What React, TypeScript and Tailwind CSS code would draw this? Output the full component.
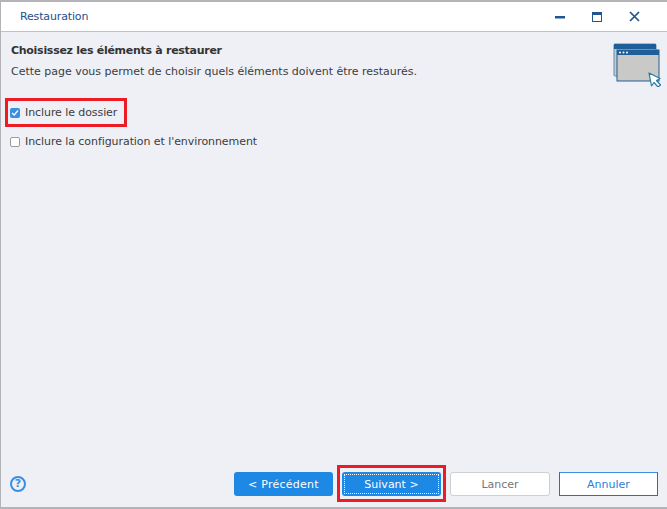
const font = "font-['DejaVu_Sans',sans-serif]";

function WindowArt() {
  return (
    <svg width="48" height="44" viewBox="0 0 48 44" className="shrink-0">
      <rect x="1" y="1" width="42" height="32" rx="1" fill="#c9c9c7" stroke="#5b8db8" />
      <rect x="1" y="1" width="42" height="5" fill="#1f5f99" />
      <rect x="4" y="7" width="42" height="31" fill="#c9c9c7" stroke="#1f5f99" />
      <rect x="4" y="7" width="42" height="5" fill="#1f5f99" />
      <circle cx="7" cy="9.5" r="1" fill="#fff" />
      <circle cx="10.5" cy="9.5" r="1" fill="#fff" />
      <circle cx="14" cy="9.5" r="1" fill="#fff" />
      <path d="M36 30 L38.5 43 L41 39.5 L45 44 L47.5 42 L43.5 37.5 L47 35.5 Z" fill="#fff" stroke="#2a7aa8" strokeWidth="1.2" strokeLinejoin="round" />
    </svg>
  );
}

function TitleButtons() {
  return (
    <div className="ml-auto flex items-center text-[#1f5590]">
      <svg width="10" height="10" viewBox="0 0 10 10" className="mr-[27px]">
        <rect x="0" y="4" width="10" height="2.5" fill="currentColor" />
      </svg>
      <span className="w-[10px] h-[10px] border border-[#1f5590] border-t-[3px] mr-[27px]" />
      <svg width="11" height="11" viewBox="0 0 11 11" className="mr-[27px]">
        <path d="M1 1 L10 10 M10 1 L1 10" stroke="currentColor" strokeWidth="1.7" fill="none" />
      </svg>
    </div>
  );
}

export default function App() {
  return (
    <div className={`${font} w-[667px] h-[509px] flex flex-col bg-[#eef0f5] border-t-2 border-l border-b-2 border-[#b4b4b8] text-[11px] leading-[16px] text-[#3c3c3c]`}>
      <header className="h-[30px] shrink-0 bg-white border-b border-[#c0c0c0] flex items-center pl-[19px]">
        <span className="text-[#1f4e8c] tracking-[-0.15px]">Restauration</span>
        <TitleButtons />
      </header>

      <main className="flex-1 flex flex-col relative">
        <div className="flex justify-between pl-[10px] pr-[6px] pt-[11px]">
          <div>
            <h1 className="font-bold text-[#333] tracking-[-0.28px]">Choisissez les éléments à restaurer</h1>
            <p className="mt-[5px] tracking-[-0.015px]">Cette page vous permet de choisir quels éléments doivent être restaurés.</p>
          </div>
          <WindowArt />
        </div>

        <div className="ml-[4px] mt-[11px] w-[122px] h-[29px] border-[3px] border-[#ed1c24] flex items-center pl-[2px] gap-[5px]">
          <span className="w-[10px] h-[10px] rounded-[2px] bg-[#3b8fe0] flex items-center justify-center">
            <svg width="8" height="8" viewBox="0 0 8 8">
              <path d="M1 4 L3.2 6 L7 1.5" stroke="#fff" strokeWidth="1.3" fill="none" />
            </svg>
          </span>
          <span className="whitespace-nowrap tracking-[-0.08px]">Inclure le dossier</span>
        </div>

        <label className="ml-[9px] mt-[7px] flex items-center gap-[5px]">
          <span className="w-[10px] h-[10px] rounded-[2px] border border-[#9a9a9a] bg-white" />
          <span className="tracking-[-0.07px]">Inclure la configuration et l'environnement</span>
        </label>

        <footer className="mt-auto flex items-center pl-[9px] pr-[9px] pb-[5px]">
          <span className="w-[16px] h-[16px] rounded-full border-2 border-[#3b8fe0] text-[#3b8fe0] text-[11px] leading-[12px] font-bold text-center">?</span>
          <div className="ml-auto flex items-center">
            <button className="w-[99px] h-[24px] pt-[2px] rounded-[3px] bg-[#1e88e5] text-white tracking-[0.25px]">&lt; Précédent</button>
            <div className="ml-[4px] w-[109px] h-[37px] border-[3px] border-[#ed1c24] flex items-center justify-center">
              <button className="w-[99px] h-[24px] rounded-[3px] bg-[#1e88e5] text-white p-[2px]">
                <span className="flex items-center justify-center w-full h-full pt-[2px] border border-dotted border-white">Suivant &gt;</span>
              </button>
            </div>
            <button className="ml-[4px] w-[100px] h-[24px] pt-[2px] rounded-[3px] bg-white border border-[#cfcfcf] text-[#777]">Lancer</button>
            <button className="ml-[9px] w-[99px] h-[24px] pt-[2px] bg-white border border-[#2272b8] border-t-[#3b8fe0] text-[#2b7fd8]">Annuler</button>
          </div>
        </footer>
      </main>
    </div>
  );
}
